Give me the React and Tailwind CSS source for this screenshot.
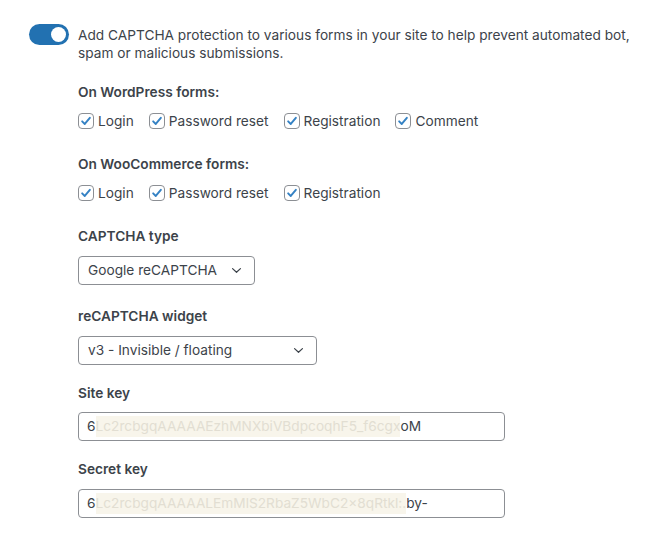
import React from 'react'

function Check({ label }) {
  return (
    <label className="flex items-center gap-[4px]">
      <span className="flex h-[16px] w-[16px] items-center justify-center rounded-[4px] border border-[#8c8f94] bg-white">
        <svg viewBox="0 0 16 16" className="h-[14px] w-[14px]">
          <path
            d="M3.6 8.4 L6.6 11.4 L12.4 4.4"
            fill="none"
            stroke="#3582c4"
            strokeWidth="2.2"
            strokeLinecap="round"
            strokeLinejoin="round"
          />
        </svg>
      </span>
      <span>{label}</span>
    </label>
  )
}

function Chevron() {
  return (
    <svg viewBox="0 0 12 8" className="h-[7px] w-[11px]">
      <path
        d="M1.5 1.8 L6 6 L10.5 1.8"
        fill="none"
        stroke="#3c434a"
        strokeWidth="1.4"
        strokeLinecap="round"
        strokeLinejoin="round"
      />
    </svg>
  )
}

function Select({ value, width }) {
  return (
    <div
      className={`flex h-[29px] items-center justify-between rounded-[4px] border border-[#8c8f94] bg-white pl-[9px] pr-[12px] ${width}`}
    >
      <span>{value}</span>
      <Chevron />
    </div>
  )
}

function KeyInput({ head, hidden, tail }) {
  return (
    <div className="flex h-[29px] w-[427px] items-center rounded-[4px] border border-[#8c8f94] bg-white pl-[8px]">
      <span>{head}</span>
      <span className="bg-[#f8f5eb] text-[#e2ded2]">{hidden}</span>
      <span>{tail}</span>
    </div>
  )
}

export default function App() {
  return (
    <div className="min-h-[541px] w-[669px] bg-white font-['Inter',Arial,sans-serif] text-[13.7px] text-[#3c434a]">
      <div className="flex pl-[29px] pt-[24px]">
        <div className="flex h-[21px] w-[40px] shrink-0 items-center justify-end rounded-full bg-[#2271b1] pr-[3px]">
          <span className="h-[15px] w-[15px] rounded-full bg-white" />
        </div>

        <div className="ml-[9px] pt-[2px]">
          <p className="leading-[18px]">
            Add CAPTCHA protection to various forms in your site to help prevent automated bot,
            <br />
            spam or malicious submissions.
          </p>

          <h3 className="mt-[20px] font-semibold leading-[20px]">On WordPress forms:</h3>
          <div className="mt-[9px] flex h-[20px] items-center gap-[15px] leading-[20px]">
            <Check label="Login" />
            <Check label="Password reset" />
            <Check label="Registration" />
            <Check label="Comment" />
          </div>

          <h3 className="mt-[23px] font-semibold leading-[20px]">On WooCommerce forms:</h3>
          <div className="mt-[9px] flex h-[20px] items-center gap-[15px] leading-[20px]">
            <Check label="Login" />
            <Check label="Password reset" />
            <Check label="Registration" />
          </div>

          <h3 className="mt-[23px] font-semibold leading-[20px]">CAPTCHA type</h3>
          <div className="mt-[10px]">
            <Select value="Google reCAPTCHA" width="w-[177px]" />
          </div>

          <h3 className="mt-[21px] font-semibold leading-[20px]">reCAPTCHA widget</h3>
          <div className="mt-[10px]">
            <Select value="v3 - Invisible / floating" width="w-[239px]" />
          </div>

          <h3 className="mt-[18px] font-semibold leading-[20px]">Site key</h3>
          <div className="mt-[9px]">
            <KeyInput head="6" hidden="Lc2rcbgqAAAAAEzhMNXbiVBdpcoqhF5_f6cgx" tail="oM" />
          </div>

          <h3 className="mt-[18px] font-semibold leading-[20px]">Secret key</h3>
          <div className="mt-[10px]">
            <KeyInput head="6" hidden="Lc2rcbgqAAAAALEmMlS2RbaZ5WbC2x8qRtkl:." tail="by-" />
          </div>
        </div>
      </div>
    </div>
  )
}
